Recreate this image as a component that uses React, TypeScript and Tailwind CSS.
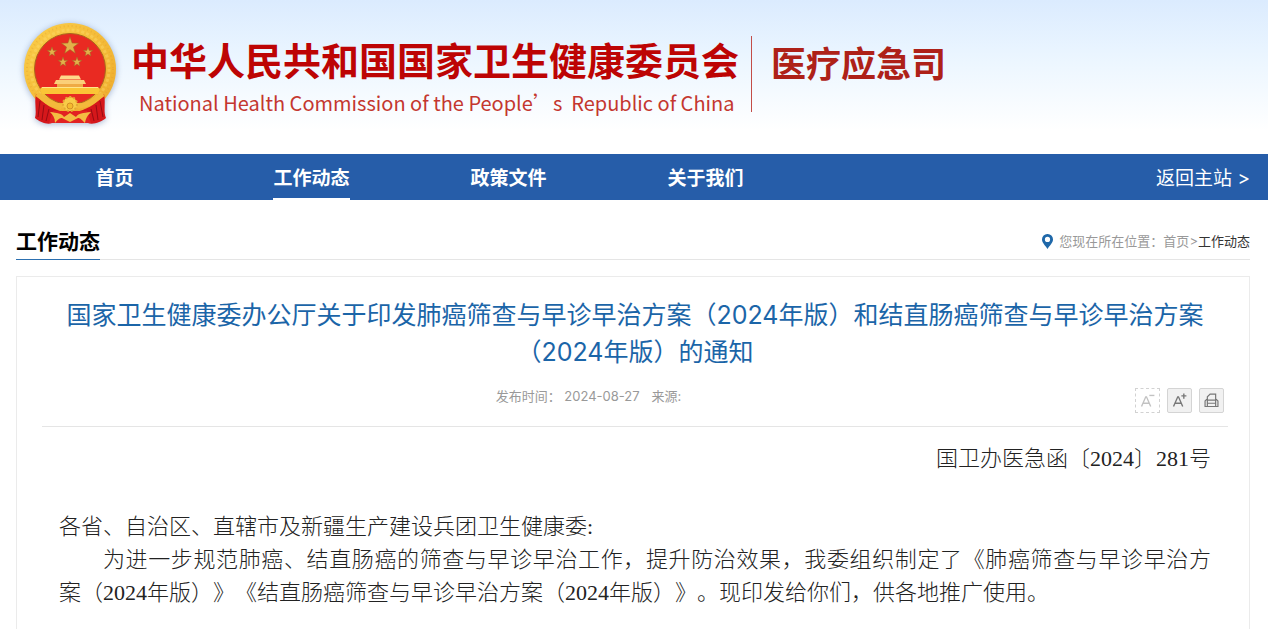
const navItems = ["首页", "工作动态", "政策文件", "关于我们"];

const stars = [
  { x: 47, y: 24, r: 9 },
  { x: 29, y: 30, r: 5 },
  { x: 65, y: 30, r: 5 },
  { x: 40, y: 40, r: 5 },
  { x: 54, y: 40, r: 5 },
];

function starPoints(cx: number, cy: number, r: number) {
  return Array.from({ length: 10 }, (_, i) => {
    const radius = i % 2 === 0 ? r : r * 0.4;
    const angle = (Math.PI / 5) * i - Math.PI / 2;
    return `${cx + radius * Math.cos(angle)},${cy + radius * Math.sin(angle)}`;
  }).join(" ");
}

function Emblem() {
  return (
    <svg viewBox="0 0 96 104" className="w-24 h-[104px] shrink-0 drop-shadow-[0_1px_3px_rgba(60,90,150,0.45)]" aria-hidden="true">
      <defs>
        <linearGradient id="gold" x1="0" y1="0" x2="1" y2="1">
          <stop offset="0" stopColor="#fbcf4b" />
          <stop offset="0.5" stopColor="#f4bb38" />
          <stop offset="1" stopColor="#eeab2e" />
        </linearGradient>
      </defs>
      <circle cx="47" cy="47" r="46" fill="url(#gold)" />
      <circle cx="47" cy="47" r="43" fill="none" stroke="#d9962a" strokeWidth="2" strokeDasharray="1 3" opacity="0.3" />
      <circle cx="47" cy="47" r="39" fill="none" stroke="#ffe275" strokeWidth="3" strokeDasharray="3 2" opacity="0.35" />
      <circle cx="47" cy="47" r="35.5" fill="#e92a22" stroke="#a9661c" strokeWidth="1" />
      {stars.map((s) => (
        <polygon key={`${s.x}-${s.y}`} points={starPoints(s.x, s.y, s.r)} fill="#e3b04a" stroke="#9c6a24" strokeWidth="0.5" />
      ))}
      <path d="M38 53.500h18l2 4H36z" fill="#ffd98a" />
      <path d="M33 58h28l2 4H31z" fill="#fbcf78" />
      <path d="M34 62h26v4H34z" fill="#efaa45" />
      <path d="M19 65h56l2 2-2 5H19l-2-5z" fill="#fbc536" />
      <path d="M19 65h56v1H19z" fill="#ffe58a" />
      {/* ribbons */}
      <path d="M13 72c6 9 15 14 24 17l-8 12c-5 2-12-1-17-5 2-7-1-15 1-24zM81 72c-6 9-15 14-24 17l8 12c5 2 13-1 18-5-3-7 0-15-2-24z" fill="#d5171b" />
      <path d="M30 89h34l4 12H26z" fill="#e22222" />
      <path d="M17 79l-2 16M21 83l-2 15M26 87l-3 12M77 79l3 16M73 83l2 15M68 87l3 12" stroke="#960c12" strokeWidth="1" />
      <path d="M14 72c8 6 16 14 28 11M80 72c-8 6-16 14-28 11" stroke="#f3ba3b" strokeWidth="5" fill="none" />
      {/* gear and sheaf */}
      <circle cx="47" cy="82" r="7" fill="#f8cc48" stroke="#e3aa33" strokeWidth="2" strokeDasharray="2 2" />
      <circle cx="47" cy="84" r="3" fill="#f5bb2e" stroke="#d38f25" strokeWidth="1" />
      <path d="M27 90c7 1 12 1 14 5l6-4 6 4c2-4 7-4 15-5-4 4-5 6-6 11-4-4-5-5-7-5l-8 4-8-4c-2 0-4 1-7 5 0-5-2-8-5-11z" fill="#f3bd42" />
    </svg>
  );
}

function PinIcon() {
  return (
    <svg viewBox="0 0 11 15" className="w-[11px] h-[15px]" aria-hidden="true">
      <path fillRule="evenodd" d="M5.500 0A5.400 5.400 0 0 0 0 5.500C0 9 3.500 11.500 5.500 15 7.500 11.500 11 9 11 5.500A5.400 5.400 0 0 0 5.500 0zm0 2.800a2.600 2.600 0 1 1 0 5.200 2.600 2.600 0 0 1 0-5.200z" fill="#1f68a9" />
    </svg>
  );
}

function FontIcon({ plus }: { plus?: boolean }) {
  return (
    <svg viewBox="0 0 25 25" className="w-full h-full" fill="none" stroke="currentColor" aria-hidden="true">
      <path d="M6 19l4.600-10.500h.8L16 19M7.500 15.500h7" strokeWidth="1.500" />
      <path d={plus ? "M14.500 7.500h5.500M17.200 5v5.500" : "M14.500 7h5.500"} strokeWidth="1.500" />
    </svg>
  );
}

function PrintIcon() {
  return (
    <svg viewBox="0 0 25 25" className="w-full h-full" fill="none" stroke="currentColor" strokeWidth="1.300" aria-hidden="true">
      <path d="M8 11.500V8.500L11 5.500h6v6M7.500 11L5.500 13v6h14v-6l-2-2M8 12h9M8 15.500h9M8 11.500v7M17 11.500v7" />
    </svg>
  );
}

export default function App() {
  return (
    <div className="min-h-screen bg-white font-['Inter','Noto_Sans_CJK_SC',sans-serif] [text-spacing-trim:space-all]" lang="zh-CN">
      <header className="flex items-start h-[154px] pl-[23px] pt-[22px] bg-linear-to-b from-[#dbebfe] via-[#eaf5ff] via-35% to-white to-85%">
        <Emblem />
        <div className="ml-3 pt-1.5 font-['Noto_Sans_CJK_SC',sans-serif] whitespace-nowrap">
          <h1 className="text-[38px] leading-[62px] font-bold text-[#bd0404]">中华人民共和国国家卫生健康委员会</h1>
          <p className="pl-2 text-[20px] leading-[26px] text-[#c4372f]">
            National Health Commission of the People’s&nbsp; Republic of China
          </p>
        </div>
        <div className="ml-3 mt-[14px] h-[76px] border-l border-[#c34d48] pl-[19px] whitespace-nowrap">
          <h2 className="text-[35px] leading-[56px] font-bold text-[#ae2118]">医疗应急司</h2>
        </div>
      </header>

      <nav className="flex justify-between h-[46px] bg-[#265da9] pl-4 pr-[18px] text-[19px] text-white">
        <ul className="flex grow">
          {navItems.map((item) => (
            <li key={item} className="w-[197px] flex justify-center">
              <a href="#" className={item === "工作动态" ? "pt-[11px] font-bold border-b-2 border-white" : "pt-[11px] font-bold"}>
                {item}
              </a>
            </li>
          ))}
        </ul>
        <a href="#" className="pt-[11px]">返回主站 &gt;</a>
      </nav>

      <main className="pl-4 pr-[18px]">
        <div className="mt-6 flex items-stretch justify-between h-9 border-b border-[#e5e5e5]">
          <h2 className="-mb-px border-b border-[#2c70b0] text-[21px] leading-9 font-bold text-black">工作动态</h2>
          <div className="flex items-center text-[13px] text-[#999]">
            <PinIcon />
            <span className="ml-1.5">您现在所在位置：</span>
            <a href="#">首页</a>
            <span>&gt;</span>
            <a href="#" className="text-[#333]">工作动态</a>
          </div>
        </div>

        <article className="mt-4 border border-[#ebebeb] pl-[25px] pr-[21px] pt-5">
          <h1 className="text-[25px] leading-[37px] text-center text-[#1b65a8]">
            国家卫生健康委办公厅关于印发肺癌筛查与早诊早治方案（2024年版）和结直肠癌筛查与早诊早治方案（2024年版）的通知
          </h1>
          <div className="flex items-center h-14 border-b border-[#e5e5e5] pt-1 pr-1">
            <div className="grow flex justify-center gap-3 pb-2 text-[13px] text-[#999]">
              <span>发布时间： 2024-08-27</span>
              <span>来源:</span>
            </div>
            <div className="flex gap-[7px]">
              <button aria-label="缩小字体" className="size-[25px] border border-dashed border-[#d2d2d2] text-[#c2c2c2]">
                <FontIcon />
              </button>
              <button aria-label="放大字体" className="size-[25px] rounded-xs border border-[#d4d4d4] bg-[#f1f1f1] text-[#777]">
                <FontIcon plus />
              </button>
              <button aria-label="打印" className="size-[25px] rounded-xs border border-[#d4d4d4] bg-[#f1f1f1] text-[#777]">
                <PrintIcon />
              </button>
            </div>
          </div>
          <div className="px-[17px] pt-[15px] pb-8 text-[22px] leading-[33px] font-light text-[#222] font-['Liberation_Serif','Noto_Sans_CJK_SC',serif]">
            <p className="text-right">国卫办医急函〔2024〕281号</p>
            <p className="mt-[35px]">各省、自治区、直辖市及新疆生产建设兵团卫生健康委:</p>
            <p>
              <span className="block indent-[44px] [text-align-last:justify]">
                为进一步规范肺癌、结直肠癌的筛查与早诊早治工作，提升防治效果，我委组织制定了《肺癌筛查与早诊早治方
              </span>
              案（2024年版）》《结直肠癌筛查与早诊早治方案（2024年版）》。现印发给你们，供各地推广使用。
            </p>
          </div>
        </article>
      </main>
    </div>
  );
}
